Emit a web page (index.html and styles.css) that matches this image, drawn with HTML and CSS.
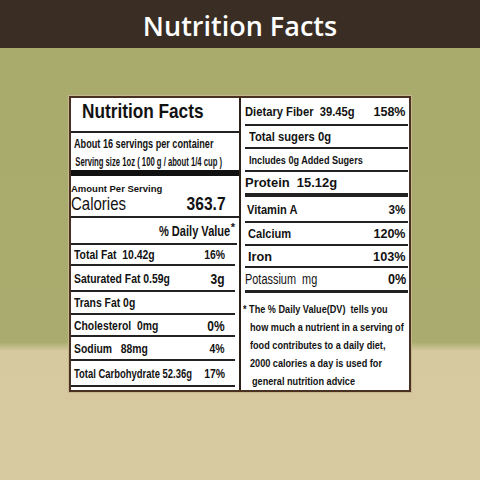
FILE: index.html
```html
<!DOCTYPE html>
<html lang="en">
<head>
    <meta charset="UTF-8">
    <meta name="viewport" content="width=device-width, initial-scale=1.0">
    <title>Nutrition Facts</title>
    <link rel="stylesheet" href="styles.css">
</head>
<body>
    <header class="top">
        <h1>Nutrition Facts</h1>
    </header>
    <main class="stage">
        <div class="label">
            <div class="col left">
                <div class="title"><span class="sq">Nutrition Facts</span></div>
                <div class="serving">
                    <p><span class="sq serv-count">About 16 servings per container</span></p>
                    <p><span class="sq serv-size">Serving size 1oz ( 100 g / about 1/4 cup )</span></p>
                </div>
                <div class="amount">
                    <p class="amount-head">Amount Per Serving</p>
                    <div class="cal">
                        <span class="sq cal-name">Calories</span>
                        <b class="sq val cal-num">363.7</b>
                    </div>
                </div>
                <div class="dv"><span class="sq val">% Daily Value</span><sup>*</sup></div>
                <div class="row r-fat"><span class="sq">Total Fat  10.42g</span><span class="sq val">16%</span></div>
                <div class="row r-sat"><span class="sq">Saturated Fat 0.59g</span><span class="sq val big">3g</span></div>
                <div class="row r-trans"><span class="sq">Trans Fat 0g</span></div>
                <div class="row r-chol"><span class="sq">Cholesterol  0mg</span><span class="sq val big">0%</span></div>
                <div class="row r-sod"><span class="sq">Sodium   88mg</span><span class="sq val">4%</span></div>
                <div class="row r-carb"><span class="sq">Total Carbohydrate 52.36g</span><span class="sq val">17%</span></div>
            </div>
            <div class="col right">
                <div class="row r-fiber"><span class="sq">Dietary Fiber  39.45g</span><span class="sq val">158%</span></div>
                <div class="row r-sugar"><span class="sq">Total sugers 0g</span></div>
                <div class="row r-added"><span class="sq">Includes 0g Added Sugers</span></div>
                <div class="row r-protein"><span class="sq">Protein  15.12g</span></div>
                <div class="row r-vita"><span class="sq">Vitamin A</span><span class="sq val">3%</span></div>
                <div class="row r-calc"><span class="sq">Calcium</span><span class="sq val">120%</span></div>
                <div class="row r-iron"><span class="sq">Iron</span><span class="sq val">103%</span></div>
                <div class="row r-pot"><span class="sq">Potassium  mg</span><span class="sq val">0%</span></div>
                <div class="note">
                    <p><span class="sq">* The % Daily Value(DV)  tells you</span></p>
                    <p class="in"><span class="sq">how much a nutrient in a serving of</span></p>
                    <p class="in"><span class="sq">food contributes to a daily diet,</span></p>
                    <p class="in"><span class="sq">2000 calories a day is used for</span></p>
                    <p class="in more"><span class="sq">general nutrition advice</span></p>
                </div>
            </div>
        </div>
    </main>
</body>
</html>
```

FILE: styles.css
```css
* {
    box-sizing: border-box;
}

body {
    margin: 0;
    width: 480px;
    height: 480px;
    overflow: hidden;
    font-family: "Liberation Sans", Arial, sans-serif;
    color: #121212;
}

p {
    margin: 0;
}

.top {
    height: 48px;
    padding-top: 2px;
    background: #3a2e24;
    display: flex;
    justify-content: center;
    align-items: center;
}

.top h1 {
    margin: 0;
    font: 600 27px "Open Sans", sans-serif;
    color: #fff;
}

.stage {
    height: 432px;
    padding-top: 48px;
    background: linear-gradient(#a8ab6c 0, #a9ac6e 294px, #d6c89f 303px, #d7c9a0 100%);
}

/* label card */
.label {
    width: 342px;
    margin: 0 auto;
    display: flex;
    background: #fff;
    border: 2px solid #4a3020;
    box-shadow: 0 0 0 1px #c7b68f;
}

.col {
    width: 169px;
    display: flex;
    flex-direction: column;
}

.col.left {
    width: 170px;
    border-right: 2px solid #2a2018;
}

/* squeezed (narrow) type */
.sq {
    display: inline-block;
    white-space: pre;
    transform: scaleX(var(--s, .77));
    transform-origin: left center;
}

.sq.val {
    flex: none;
    transform-origin: right center;
}

.title {
    height: 35px;
    border-bottom: 2px solid #222;
    padding-left: 11px;
    font-size: 21px;
    font-weight: bold;
    line-height: 26px;
    --s: .82;
}

.serving {
    height: 43px;
    border-bottom: 6px solid #111;
    padding: 1px 0 0 3px;
    font-weight: bold;
}

.serv-count {
    font-size: 12.5px;
    line-height: 15px;
    --s: .73;
}

.serv-size {
    font-size: 12px;
    line-height: 14px;
    padding-left: 2px;
    --s: .64;
}

.amount {
    height: 42px;
    border-bottom: 2px solid #222;
    padding-top: 8px;
}

.amount-head {
    font-size: 9.5px;
    font-weight: bold;
    line-height: 10px;
}

.cal {
    display: flex;
    justify-content: space-between;
    align-items: baseline;
    padding-right: 13px;
    line-height: 20px;
}

.cal-name {
    font-size: 19px;
    --s: .79;
}

.cal-num {
    font-size: 19px;
    --s: .82;
}

.dv {
    height: 27px;
    border-bottom: 2px solid #222;
    margin-right: 2px;
    padding-right: 2px;
    display: flex;
    justify-content: flex-end;
    align-items: center;
    font-size: 14px;
    font-weight: bold;
    --s: .79;
}

.dv sup {
    align-self: flex-start;
    margin-top: 4px;
    font-size: 11px;
    line-height: 1;
}

/* nutrient rows */
.row {
    display: flex;
    align-items: center;
    border-bottom: 2px solid #222;
    font-size: 13.5px;
    font-weight: bold;
}

.row > .sq:first-child {
    flex: 1 1 0;
    min-width: 0;
}

.left .row {
    margin-right: 4px;
    padding: 0 10px 0 3px;
}

.right .row {
    margin: 0 2px 0 4px;
    padding: 0 2px 0 0;
}

.big {
    font-size: 15px;
    --s: .8;
}

.r-fat { height: 21px; }
.r-sat { height: 26px; }
.r-trans { height: 23px; }
.r-chol { height: 22px; }
.r-sod { height: 24px; }
.r-carb { height: 26px; --s: .70; }
.r-carb .val { --s: .77; }

.r-fiber { height: 28px; --s: .83; }
.r-fiber .val { --s: .93; }

.right .r-sugar {
    height: 23px;
    padding-left: 4px;
    --s: .83;
}

.right .r-added {
    height: 23px;
    padding-left: 4px;
    font-size: 11.5px;
    --s: .79;
}

.r-protein {
    height: 25px;
    border-bottom-width: 4px;
    --s: .96;
}

.right .r-vita {
    height: 26px;
    padding-left: 2px;
    --s: .82;
}
.r-vita .val { --s: .87; }

.right .r-calc {
    height: 23px;
    padding-left: 3px;
    --s: .82;
}
.r-calc .val { --s: .93; }

.right .r-iron {
    height: 22px;
    padding-left: 3px;
    --s: .94;
}

.r-pot {
    height: 25px;
    border-bottom-width: 3px;
    font-size: 14px;
    font-weight: normal;
    --s: .78;
}
.r-pot .val { font-weight: bold; --s: .9; }

.note {
    padding: 7px 0 0 2px;
    font-size: 11px;
    font-weight: bold;
    line-height: 18px;
    --s: .83;
}

.note .in {
    padding-left: 7px;
}

.note .more {
    padding-left: 9px;
}
```
